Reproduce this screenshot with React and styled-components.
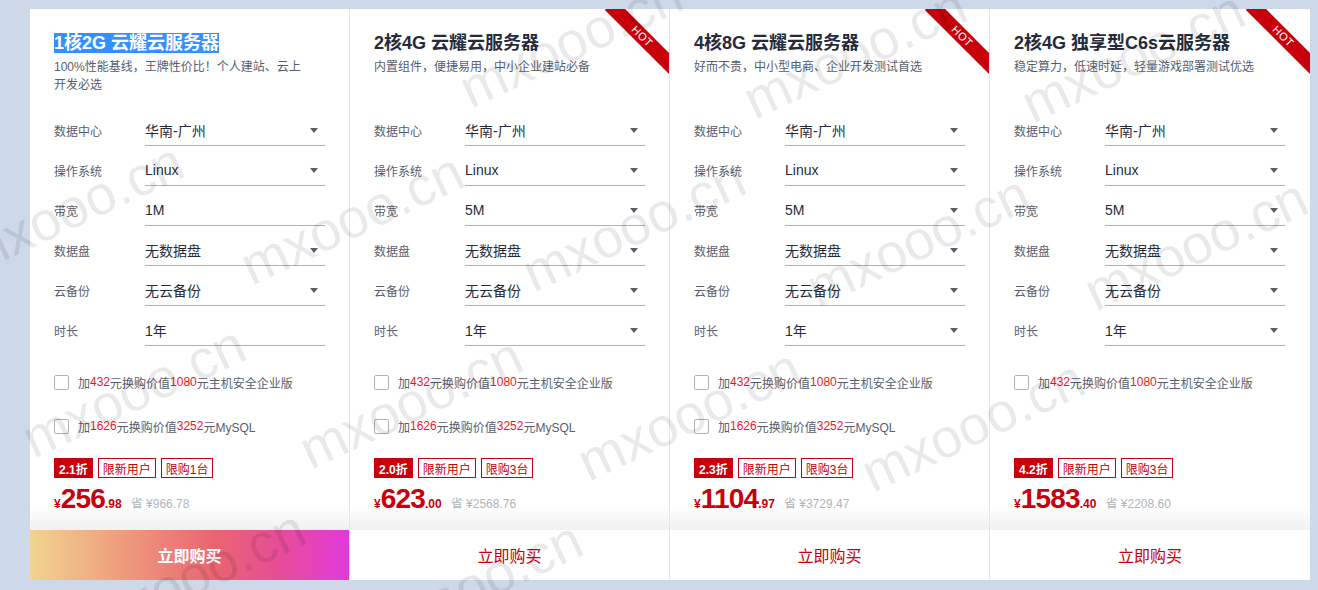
import React from "react";
import styled, { createGlobalStyle, css } from "styled-components";

const GlobalStyle = createGlobalStyle`
  body {
    margin: 0;
    background: #cdd8e9;
    font-family: "Liberation Sans", "Noto Sans CJK SC", sans-serif;
  }
`;

const RED = "#c7000b";

const Page = styled.div`
  position: relative;
  height: 590px;
  overflow: hidden;
  padding: 9px 8px 0 30px;
  box-sizing: border-box;
`;

const CardRow = styled.div`
  display: flex;
  width: 1280px;
  height: 571px;
`;

const Card = styled.div`
  position: relative;
  overflow: hidden;
  width: 320px;
  box-sizing: border-box;
  background: #fff;
  display: flex;
  flex-direction: column;
  &:not(:last-child) {
    border-right: 1px solid #e3e5ea;
  }
`;

const Body = styled.div`
  padding: 23px 24px 0 24px;
`;

const Header = styled.div`
  height: 82px;
`;

const Title = styled.h3`
  margin: 0;
  font-size: 18px;
  line-height: 22px;
  font-weight: 600;
  color: #252b3a;
`;

const Selected = styled.span`
  background: #3390ff;
  color: #fff;
`;

const Desc = styled.p`
  margin: 4px 0 0;
  max-width: 250px;
  font-size: 12px;
  line-height: 18px;
  color: #575d6c;
`;

const Form = styled.div`
  display: flex;
  flex-direction: column;
  gap: 8px;
`;

const Row = styled.div`
  display: flex;
  align-items: center;
  height: 32px;
`;

const Label = styled.span`
  width: 91px;
  font-size: 12px;
  color: #575d6c;
`;

const Select = styled.div`
  width: 180px;
  height: 32px;
  box-sizing: border-box;
  border-bottom: 1px solid #adb0b8;
  display: flex;
  align-items: center;
  justify-content: space-between;
  padding: 1px 7px 0 0;
  font-size: 14px;
  color: #252b3a;
`;

const Caret = styled.span`
  width: 0;
  height: 0;
  border-left: 4px solid transparent;
  border-right: 4px solid transparent;
  border-top: 5px solid #575d6c;
`;

const Addons = styled.div`
  margin-top: 26px;
  height: 64px;
  display: flex;
  flex-direction: column;
  gap: 24px;
`;

const Addon = styled.label`
  display: flex;
  align-items: center;
  height: 20px;
  font-size: 12px;
  color: #575d6c;
`;

const Check = styled.span`
  width: 15px;
  height: 15px;
  box-sizing: border-box;
  border: 1px solid #adb0b8;
  border-radius: 2px;
  margin-right: 9px;
  background: #fff;
`;

const Num = styled.span`
  color: #f0141e;
`;

const Deal = styled.div`
  flex: 1;
  padding: 22px 24px 0;
  background: linear-gradient(180deg, #fff 0%, #fff 72%, #f1f1f1 100%);
`;

const Tags = styled.div`
  display: flex;
  gap: 5px;
`;

const Tag = styled.span`
  height: 20px;
  box-sizing: border-box;
  display: flex;
  align-items: center;
  padding: 0 4px;
  font-size: 12px;
  border: 1px solid ${RED};
  color: ${RED};
  ${(p) =>
    p.$solid &&
    css`
      background: ${RED};
      color: #fff;
      font-weight: 700;
    `}
`;

const Price = styled.div`
  margin-top: 6px;
  line-height: 30px;
  color: ${RED};
  font-weight: 700;
  white-space: nowrap;
`;

const Small = styled.span`
  font-size: 12px;
`;

const Big = styled.span`
  font-size: 28px;
  letter-spacing: -0.8px;
`;

const Save = styled.span`
  margin-left: 9px;
  font-size: 12px;
  font-weight: 400;
  color: #b1b4bb;
`;

const BuyButton = styled.button`
  height: 50px;
  border: 0;
  width: 100%;
  font-family: inherit;
  font-size: 16px;
  cursor: pointer;
  background: #fff;
  color: ${RED};
  ${(p) =>
    p.$primary &&
    css`
      color: #fff;
      font-weight: 600;
      background: linear-gradient(90deg, #f1d48f 0%, #ee9a7d 30%, #ea6472 58%, #e64d97 78%, #e03adb 100%);
    `}
`;

const Ribbon = styled.div`
  position: absolute;
  top: 20px;
  right: -18px;
  width: 90px;
  height: 15px;
  background: ${RED};
  transform: rotate(45deg);
  color: #fff;
  font-size: 11px;
  line-height: 15px;
  text-align: center;
  letter-spacing: 0.5px;
`;

const Watermarks = styled.div`
  position: absolute;
  inset: 0;
  pointer-events: none;
`;

const Mark = styled.span`
  position: absolute;
  font-family: "Liberation Sans", sans-serif;
  font-size: 55px;
  line-height: 55px;
  color: rgba(0, 0, 0, 0.085);
  transform-origin: 0 85%;
  transform: rotate(-25deg);
  white-space: nowrap;
`;

const marks = [
  [471, 109], [755, 120], [1033, 124],
  [-28, 276], [252, 286], [534, 293], [818, 308], [1096, 312],
  [34, 459], [311, 470], [589, 482], [873, 493],
  [94, 643], [371, 654],
];

const cards = [
  {
    title: "1核2G 云耀云服务器",
    selected: true,
    desc: "100%性能基线，王牌性价比！个人建站、云上开发必选",
    bandwidth: "1M",
    fixed: true,
    mysql: true,
    discount: "2.1折",
    limit: "限购1台",
    price: "256",
    cents: ".98",
    save: "¥966.78",
    primary: true,
  },
  {
    title: "2核4G 云耀云服务器",
    desc: "内置组件，便捷易用，中小企业建站必备",
    bandwidth: "5M",
    hot: true,
    mysql: true,
    discount: "2.0折",
    limit: "限购3台",
    price: "623",
    cents: ".00",
    save: "¥2568.76",
  },
  {
    title: "4核8G 云耀云服务器",
    desc: "好而不贵，中小型电商、企业开发测试首选",
    bandwidth: "5M",
    hot: true,
    mysql: true,
    discount: "2.3折",
    limit: "限购3台",
    price: "1104",
    cents: ".97",
    save: "¥3729.47",
  },
  {
    title: "2核4G 独享型C6s云服务器",
    desc: "稳定算力，低速时延，轻量游戏部署测试优选",
    bandwidth: "5M",
    hot: true,
    mysql: false,
    discount: "4.2折",
    limit: "限购3台",
    price: "1583",
    cents: ".40",
    save: "¥2208.60",
  },
];

function ServerCard({ card }) {
  const fields = [
    ["数据中心", "华南-广州", true],
    ["操作系统", "Linux", true],
    ["带宽", card.bandwidth, !card.fixed],
    ["数据盘", "无数据盘", true],
    ["云备份", "无云备份", true],
    ["时长", "1年", !card.fixed],
  ];
  return (
    <Card>
      {card.hot && <Ribbon>HOT</Ribbon>}
      <Body>
        <Header>
          <Title>{card.selected ? <Selected>{card.title}</Selected> : card.title}</Title>
          <Desc>{card.desc}</Desc>
        </Header>
        <Form>
          {fields.map(([label, value, caret]) => (
            <Row key={label}>
              <Label>{label}</Label>
              <Select>
                <span>{value}</span>
                {caret && <Caret />}
              </Select>
            </Row>
          ))}
        </Form>
        <Addons>
          <Addon>
            <Check />
            加<Num>432</Num>元换购价值<Num>1080</Num>元主机安全企业版
          </Addon>
          {card.mysql && (
            <Addon>
              <Check />
              加<Num>1626</Num>元换购价值<Num>3252</Num>元MySQL
            </Addon>
          )}
        </Addons>
      </Body>
      <Deal>
        <Tags>
          <Tag $solid>{card.discount}</Tag>
          <Tag>限新用户</Tag>
          <Tag>{card.limit}</Tag>
        </Tags>
        <Price>
          <Small>¥</Small>
          <Big>{card.price}</Big>
          <Small>{card.cents}</Small>
          <Save>省 {card.save}</Save>
        </Price>
      </Deal>
      <BuyButton $primary={card.primary}>立即购买</BuyButton>
    </Card>
  );
}

export default function App() {
  return (
    <Page>
      <GlobalStyle />
      <CardRow>
        {cards.map((c) => (
          <ServerCard key={c.title} card={c} />
        ))}
      </CardRow>
      <Watermarks>
        {marks.map(([x, y]) => (
          <Mark key={`${x}-${y}`} style={{ left: x, top: y - 46 }}>
            mxooo.cn
          </Mark>
        ))}
      </Watermarks>
    </Page>
  );
}
